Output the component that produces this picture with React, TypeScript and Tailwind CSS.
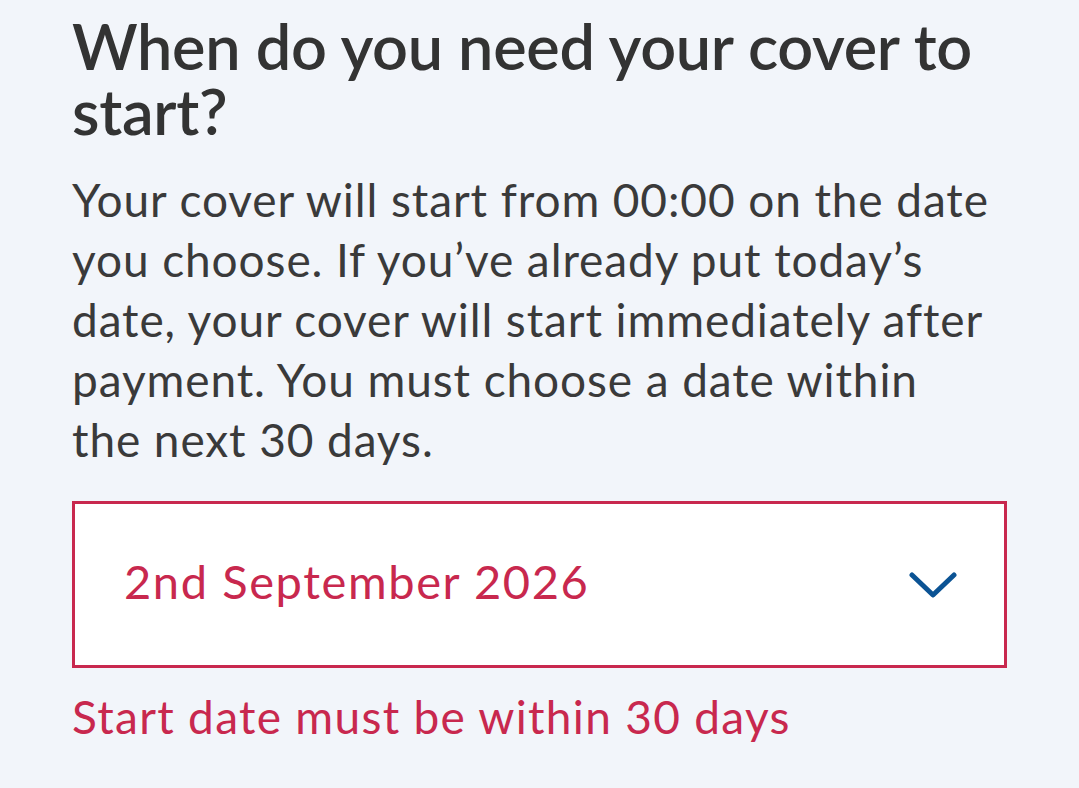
import React from "react";

export default function App() {
  return (
    <div
      className="min-h-screen w-full bg-[#f2f5fa] px-[72px] pt-[13px] pb-[40px] text-[#333333]"
      style={{ fontFamily: "Lato, 'Noto Sans', sans-serif" }}
    >
      <h1 className="whitespace-nowrap text-[63px] leading-[65px] font-semibold tracking-[-0.3px] text-[#333333]">
        When do you need your cover to
        <br />
        start?
      </h1>
      <p className="mt-[27px] whitespace-nowrap text-[46px] leading-[60px] tracking-[0.9px] text-[#3a3a3a]">
        Your cover will start from 00:00 on the date
        <br />
        you choose. If you’ve already put today’s
        <br />
        date, your cover will start immediately after
        <br />
        payment. You must choose a date within
        <br />
        the next 30 days.
      </p>
      <div className="mt-[31px] flex h-[167px] items-center justify-between border-[3px] border-[#c8284e] bg-white pb-[8px] pl-[49px] pr-[47px]">
        <span className="whitespace-nowrap text-[47px] leading-[60px] tracking-[1.6px] text-[#c8284e]">
          2nd September 2026
        </span>
        <svg
          width="48"
          height="26"
          viewBox="0 0 48 26"
          fill="none"
          className="mt-[8px]"
        >
          <polyline
            points="3,3 24,23 45,3"
            stroke="#0b5394"
            strokeWidth="5"
            strokeLinecap="round"
            strokeLinejoin="round"
          />
        </svg>
      </div>
      <p className="mt-[19px] whitespace-nowrap text-[46px] leading-[60px] tracking-[1.3px] text-[#c8284e]">
        Start date must be within 30 days
      </p>
    </div>
  );
}
